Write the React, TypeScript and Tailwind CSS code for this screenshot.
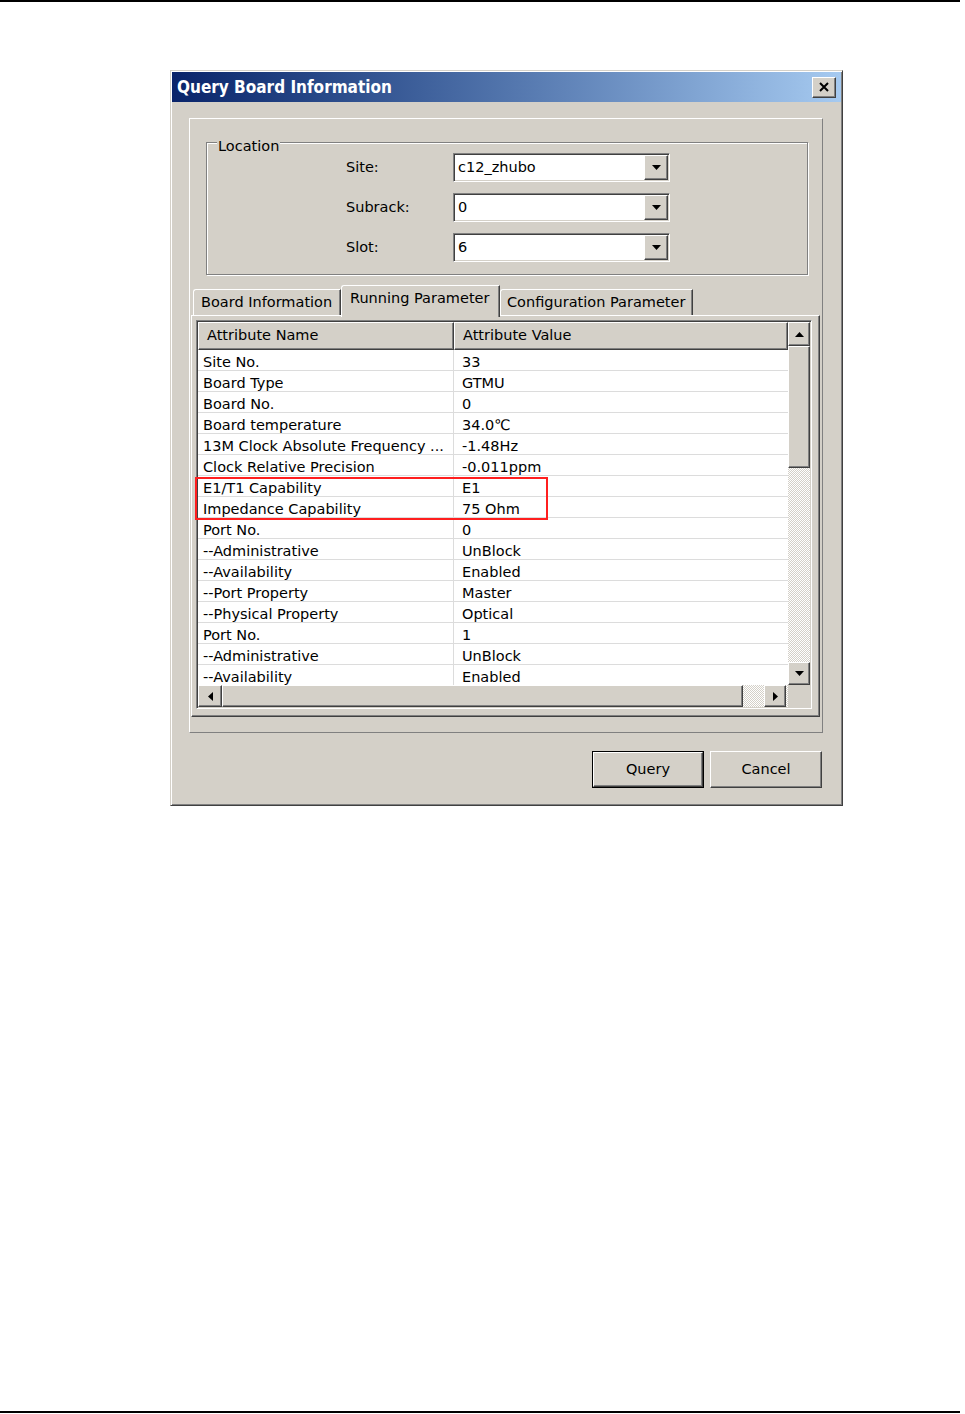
import React from 'react';

const raised =
  'border border-t-white border-l-white border-r-[#404040] border-b-[#404040] shadow-[inset_-1px_-1px_#808080,inset_1px_1px_#d4d0c8] bg-[#d4d0c8]';
const sunken =
  'border border-t-[#808080] border-l-[#808080] border-r-white border-b-white shadow-[inset_1px_1px_#404040,inset_-1px_-1px_#d4d0c8]';
const dotted =
  'bg-white bg-[image:repeating-conic-gradient(#d4d0c8_0%_25%,#ffffff_0%_50%)] bg-size-[2px_2px]';

const rows: [string, string][] = [
  ['Site No.', '33'],
  ['Board Type', 'GTMU'],
  ['Board No.', '0'],
  ['Board temperature', '34.0℃'],
  ['13M Clock Absolute Frequency ...', '-1.48Hz'],
  ['Clock Relative Precision', '-0.011ppm'],
  ['E1/T1 Capability', 'E1'],
  ['Impedance Capability', '75 Ohm'],
  ['Port No.', '0'],
  ['--Administrative', 'UnBlock'],
  ['--Availability', 'Enabled'],
  ['--Port Property', 'Master'],
  ['--Physical Property', 'Optical'],
  ['Port No.', '1'],
  ['--Administrative', 'UnBlock'],
  ['--Availability', 'Enabled'],
];

const Arrow = ({ dir }: { dir: 'up' | 'down' | 'left' | 'right' }) => {
  const d = {
    up: 'M0 5h9L4.5 0z',
    down: 'M0 0h9L4.5 5z',
    left: 'M5 0v9L0 4.5z',
    right: 'M0 0v9L5 4.5z',
  }[dir];
  const horiz = dir === 'up' || dir === 'down';
  return (
    <svg width={horiz ? 9 : 5} height={horiz ? 5 : 9} viewBox={horiz ? '0 0 9 5' : '0 0 5 9'}>
      <path d={d} fill="#000" />
    </svg>
  );
};

const Combo = ({ value }: { value: string }) => (
  <div className={`w-[217px] h-[29px] bg-white p-px flex items-center ${sunken}`}>
    <div className="flex-1 pl-[3px] pt-px">{value}</div>
    <div className={`w-[24px] h-full flex items-center justify-center ${raised}`}>
      <Arrow dir="down" />
    </div>
  </div>
);

export default function App() {
  return (
    <div className="relative w-[965px] h-[1414px] bg-white flex flex-col text-[14.5px] text-black font-['DejaVu_Sans',sans-serif]">
      <div className="h-[2px] w-[960px] bg-black" />

      {/* dialog */}
      <div className="ml-[170px] mt-[68px] w-[673px] h-[736px] p-px bg-[#d4d0c8] border border-t-[#d4d0c8] border-l-[#d4d0c8] border-r-[#404040] border-b-[#404040] shadow-[inset_1px_1px_#fff,inset_-1px_-1px_#808080] flex flex-col">
        <div className="h-[30px] flex items-center justify-between pl-[5px] pr-[5px] bg-gradient-to-r from-[#0a246a] to-[#a6caf0]">
          <span className="text-white font-bold text-[17px] leading-none font-['DejaVu_Sans_Condensed','DejaVu_Sans',sans-serif]">
            Query Board Information
          </span>
          <div className={`w-[24px] h-[21px] flex items-center justify-center ${raised}`}>
            <svg width="10" height="10" viewBox="0 0 10 10">
              <path d="M1 1L9 9M9 1L1 9" stroke="#000" strokeWidth="2" />
            </svg>
          </div>
        </div>

        {/* main frame */}
        <div className="ml-[17px] mt-[16px] w-[634px] h-[615px] border border-t-white border-l-white border-r-[#808080] border-b-[#808080] flex flex-col">
          {/* location group */}
          <div className="relative ml-[16px] mt-[23px] w-[602px] h-[133px] border border-[#808080] shadow-[inset_1px_1px_#fff,1px_1px_#fff] flex flex-col gap-[11px] pt-[10px] pl-[139px]">
            <span className="absolute left-[10px] -top-[5px] px-px bg-[#d4d0c8] leading-[17px]">Location</span>
            {[
              ['Site:', 'c12_zhubo'],
              ['Subrack:', '0'],
              ['Slot:', '6'],
            ].map(([label, value]) => (
              <div key={label} className="flex items-center">
                <span className="w-[107px]">{label}</span>
                <Combo value={value} />
              </div>
            ))}
          </div>

          {/* tabs */}
          <div className="mt-[10px] ml-[3px] h-[30px] flex items-end relative z-10">
            <div className="w-[148px] h-[26px] pl-[7px] flex items-center bg-[#d4d0c8] border-t border-l border-white border-r border-r-[#404040] rounded-tl-[3px] shadow-[inset_-1px_0_#808080]">
              Board Information
            </div>
            <div className="w-[159px] h-[32px] -mb-[2px] pl-[8px] pb-[5px] flex items-center bg-[#d4d0c8] border-t border-l border-white border-r border-r-[#404040] rounded-tl-[3px] shadow-[inset_-1px_0_#808080]">
              Running Parameter
            </div>
            <div className="w-[193px] h-[26px] pl-[6px] flex items-center bg-[#d4d0c8] border-t border-l border-white border-r border-r-[#404040] rounded-tl-[3px] shadow-[inset_-1px_0_#808080]">
              Configuration Parameter
            </div>
          </div>

          {/* tab panel */}
          <div className="ml-px w-[629px] h-[402px] border border-t-white border-l-white border-r-[#404040] border-b-[#404040] shadow-[inset_-1px_-1px_#808080] pl-[4px] pt-[4px]">
            <div className={`w-[616px] h-[389px] p-px flex flex-col ${sunken}`}>
              <div className="h-[363px] flex">
                <div className="w-[590px] flex flex-col">
                  <div className="h-[28px] flex shrink-0">
                    <div className={`w-[256px] pl-[8px] flex items-center ${raised}`}>Attribute Name</div>
                    <div className={`flex-1 pl-[8px] flex items-center ${raised}`}>Attribute Value</div>
                  </div>
                  <div className="flex-1 overflow-hidden bg-white">
                    {rows.map(([name, value], i) => (
                      <div key={i} className="h-[21px] flex border-b border-[#dcdcdc] shrink-0">
                        <div className="w-[256px] pl-[5px] pt-[3px] border-r border-[#dcdcdc] whitespace-nowrap leading-[18px]">
                          {name}
                        </div>
                        <div className="flex-1 pl-[8px] pt-[3px] leading-[18px]">{value}</div>
                      </div>
                    ))}
                  </div>
                </div>
                <div className={`w-[22px] flex flex-col ${dotted}`}>
                  <div className={`h-[24px] flex items-center justify-center ${raised}`}>
                    <Arrow dir="up" />
                  </div>
                  <div className={`h-[122px] ${raised}`} />
                  <div className="flex-1" />
                  <div className={`h-[23px] flex items-center justify-center ${raised}`}>
                    <Arrow dir="down" />
                  </div>
                </div>
              </div>
              <div className="h-[22px] flex">
                <div className={`w-[590px] flex ${dotted}`}>
                  <div className={`w-[24px] flex items-center justify-center ${raised}`}>
                    <Arrow dir="left" />
                  </div>
                  <div className={`w-[521px] ${raised}`} />
                  <div className="w-[21px]" />
                  <div className={`w-[22px] flex items-center justify-center ${raised}`}>
                    <Arrow dir="right" />
                  </div>
                  <div className="flex-1" />
                </div>
                <div className="w-[22px] bg-[#d4d0c8]" />
              </div>
            </div>
          </div>
        </div>

        {/* buttons */}
        <div className="mt-[18px] mr-[19px] flex justify-end gap-[6px]">
          <div className="w-[112px] h-[37px] border border-black">
            <div className={`h-full flex items-center justify-center ${raised}`}>Query</div>
          </div>
          <div className={`w-[112px] h-[37px] flex items-center justify-center ${raised}`}>Cancel</div>
        </div>
      </div>

      <div className="flex-1" />
      <div className="h-[2px] w-[960px] bg-black mb-px" />

      {/* annotation */}
      <div className="absolute left-[195px] top-[477px] w-[353px] h-[43px] border-2 border-[#ff1f1f]" />
    </div>
  );
}
